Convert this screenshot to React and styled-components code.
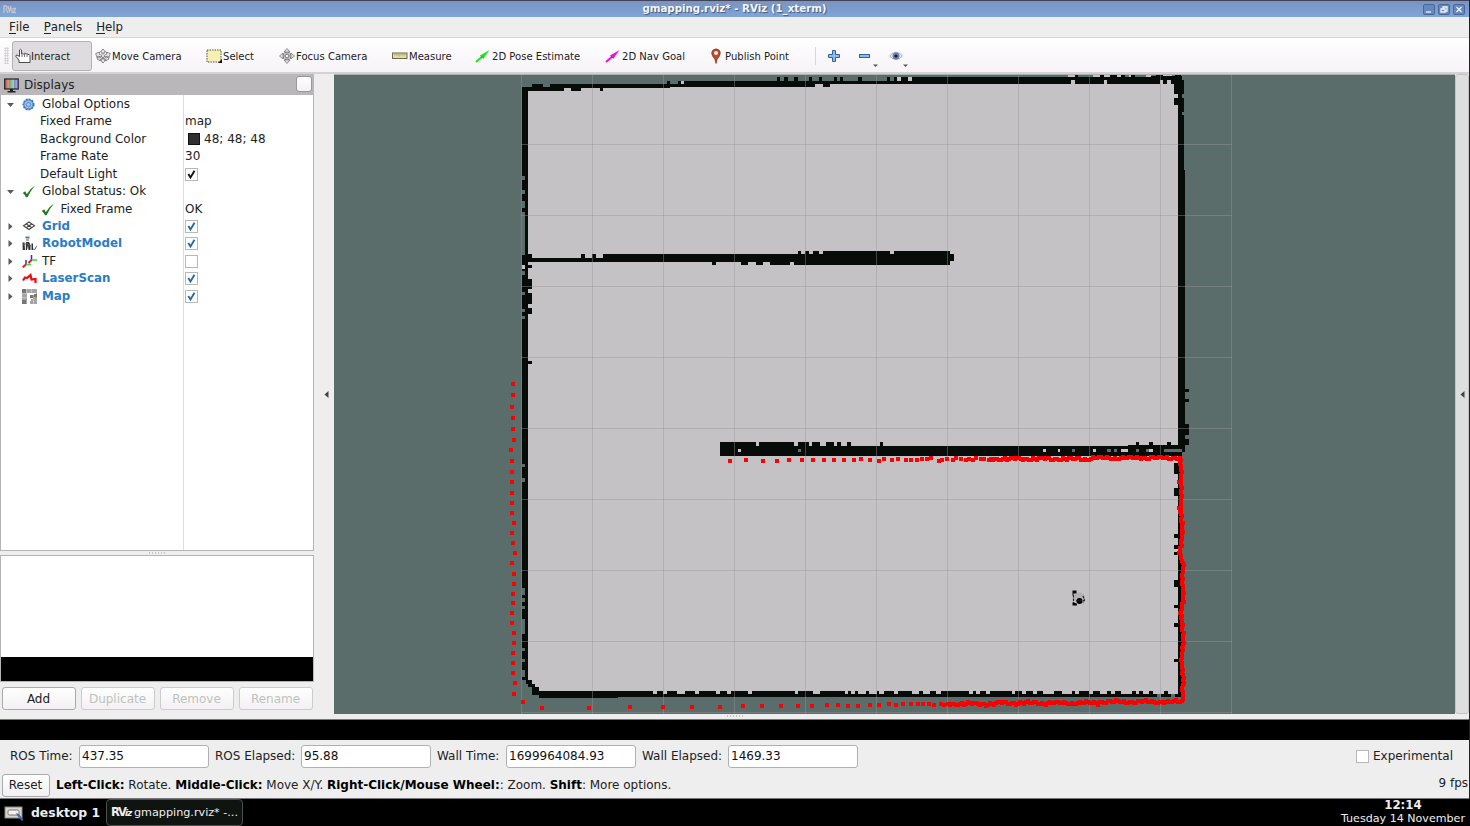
import React from "react";
import styled, { createGlobalStyle, css } from "styled-components";

const GlobalStyle = createGlobalStyle`
  html, body { margin: 0; padding: 0; background: #000; }
  * { box-sizing: border-box; }
`;

const Desktop = styled.div`
  width: 1470px;
  height: 826px;
  display: flex;
  flex-direction: column;
  overflow: hidden;
  background: #000;
  color: #1c221e;
  font-family: "DejaVu Sans", Verdana, sans-serif;
  font-size: 12px;
  line-height: 17px;
  white-space: nowrap;
`;

/* ---------- window frame ---------- */
const Window = styled.div`
  width: 1470px;
  flex: none;
  display: flex;
  flex-direction: column;
  border-right: 1px solid #222;
`;
const TitleBar = styled.header`
  height: 17px;
  flex: none;
  display: flex;
  align-items: center;
  padding: 0 4px 0 3px;
  border-top: 1px solid #40445a;
  background: linear-gradient(#7d92bb, #7a9bcb 40%, #80a6d6);
`;
const TitleText = styled.h1`
  margin: 0;
  flex: 1;
  padding: 0 0 2px 30px;
  text-align: center;
  font-size: 10.25px;
  line-height: 14px;
  font-weight: bold;
  color: #f4f6fa;
  text-shadow: 1px 1px 1px #44587c;
`;
const WindowButtons = styled.div`
  display: flex;
  gap: 3px;
`;
const MenuBar = styled.nav`
  height: 21px;
  flex: none;
  display: flex;
  gap: 14px;
  padding: 2px 9px 0;
  font-size: 11.8px;
  background: #eee;
  border-bottom: 1px solid #d8d8d8;
  u { text-decoration: none; border-bottom: 1px solid #222; display: inline-block; height: 15px; }
`;

/* ---------- toolbar ---------- */
const ToolBar = styled.div`
  height: 36px;
  flex: none;
  display: flex;
  align-items: center;
  padding-top: 1px;
  background: linear-gradient(#fff, #f7f3f7);
  border-bottom: 2px solid #d4d2d4;
  font-size: 10.05px;
`;
const Grip = styled.div`
  width: 5px;
  height: 17px;
  margin: 0 3px 0 4px;
  background: radial-gradient(circle, #c8c8c8 0.8px, transparent 1px) 0 0 / 2.5px 2.5px;
`;
const Tool = styled.div`
  width: ${(p) => p.$w}px;
  height: 30px;
  display: flex;
  align-items: center;
  gap: 1px;
  padding-top: 1px;
  padding-left: 2px;
  border: 1px solid transparent;
  border-radius: 3px;
  ${(p) => p.$active && css`
    background: #dedcde;
    border-color: #b4b2b4;
    gap: 0;
  `}
  svg { flex: none; }
`;
const Separator = styled.div`
  width: 1px;
  height: 18px;
  margin-right: 12px;
  background: #d8d6d8;
`;
const MiniTool = styled.div`
  width: ${(p) => p.$w}px;
  height: 30px;
  display: flex;
  align-items: center;
  padding-top: 1px;
`;

/* ---------- centre ---------- */
const Workspace = styled.main`
  height: 640px;
  flex: none;
  display: flex;
  background: #eee;
`;
const SidePanel = styled.aside`
  width: 314px;
  flex: none;
  display: flex;
  flex-direction: column;
`;
const PanelHeader = styled.div`
  height: 21px;
  flex: none;
  display: flex;
  align-items: center;
  gap: 5px;
  padding: 1px 2px 0 4px;
  background: #bab7ba;
`;
const PanelTitle = styled.span`
  flex: 1;
`;
const PanelButton = styled.span`
  width: 16px;
  height: 16px;
  margin-top: -2px;
  border: 1px solid #999;
  border-radius: 3px;
  background: linear-gradient(#fff, #f4f2f4);
`;
const Tree = styled.div`
  height: 456px;
  flex: none;
  display: grid;
  grid-template-columns: 183px 1fr;
  grid-template-rows: repeat(12, 17.45px) 1fr;
  border: 1px solid #b4b4b4;
  border-top: none;
  background: #fff;
`;
const NameCell = styled.div`
  display: flex;
  align-items: center;
  padding-top: 1.5px;
  border-right: 1px solid #dcdcdc;
  color: ${(p) => (p.$link ? "#2a7cc4" : "#1c221e")};
  font-weight: ${(p) => (p.$link ? "bold" : "normal")};
  font-size: ${(p) => (p.$link ? 11.85 : 11.95)}px;
`;
const Expander = styled.span`
  width: 20px;
  display: flex;
  padding-left: 5px;
`;
const IconSlot = styled.span`
  width: 20px;
  margin-left: ${(p) => p.$indent || 0}px;
  display: flex;
`;
const PlainName = styled.span`
  padding-left: 39px;
`;
const ValueCell = styled.div`
  display: flex;
  align-items: center;
  padding: 1.5px 0 0 1px;
`;
const Swatch = styled.span`
  width: 12px;
  height: 12px;
  margin: 0 4px 0 3px;
  background: #303030;
  border: 1px solid #111;
`;
const CheckBox = styled.span`
  width: 13px;
  height: 13px;
  display: flex;
  border: 1px solid #b8b8b8;
  background: #fff;
`;
const SplitHandle = styled.div`
  height: 4px;
  flex: none;
  display: flex;
  justify-content: center;
  align-items: center;
`;
const Dots = styled.span`
  width: 16px;
  height: 2px;
  background: repeating-linear-gradient(90deg, #c4c4c4 0 1px, transparent 1px 3px);
`;
const Description = styled.div`
  height: 127px;
  flex: none;
  border: 1px solid #b4b4b4;
  background: linear-gradient(#fff 101px, #000 101px);
`;
const ButtonRow = styled.div`
  display: flex;
  gap: 5px;
  padding: 5px 1px 0 2px;
`;
const PushButton = styled.span`
  width: ${(p) => p.$w || 74}px;
  height: 23px;
  flex: none;
  display: flex;
  align-items: center;
  justify-content: center;
  padding: 1px 1px 0 0;
  border: 1px solid ${(p) => (p.$disabled ? "#ccc" : "#aaa")};
  border-radius: 3px;
  background: linear-gradient(#fff, #f3f0f3);
  color: ${(p) => (p.$disabled ? "#bcc4bc" : "#1c221e")};
`;
const CollapseBar = styled.div`
  width: ${(p) => p.$w}px;
  flex: none;
  display: flex;
  align-items: center;
  justify-content: center;
  padding-left: ${(p) => p.$pad || 0}px;
  ${(p) => p.$pressed && css`
    background: #dedede;
    border: 1px solid #c4c4c4;
    border-radius: 3px;
  `}
`;
const View = styled.svg`
  width: 1121px;
  height: 640px;
  display: block;
  flex: none;
`;

/* ---------- bottom ---------- */
const BottomSplit = styled.div`
  height: 6px;
  flex: none;
  display: flex;
  justify-content: center;
  background: #eee;
  border-bottom: 1px solid #777;
  padding-top: 1px;
`;
const BlackStrip = styled.div`
  height: 20px;
  flex: none;
`;
const TimePanel = styled.section`
  height: 32px;
  flex: none;
  display: flex;
  align-items: center;
  background: #eee;
`;
const FieldLabel = styled.label`
  width: ${(p) => p.$w}px;
  padding-left: ${(p) => p.$pad}px;
`;
const Field = styled.span`
  width: 130px;
  height: 23px;
  padding: 2px;
  border: 1px solid #b0b0b0;
  border-radius: 3px;
  background: #fff;
  color: #111;
`;
const Experimental = styled.span`
  display: flex;
  align-items: center;
  gap: 4px;
  margin-left: auto;
  padding-right: 16px;
`;
const StatusBar = styled.footer`
  height: 27px;
  flex: none;
  display: flex;
  align-items: center;
  gap: 6px;
  padding: 0 1px 0 2px;
  background: #eee;
  border-bottom: 1px solid #777;
  font-size: 11.99px;
  b { color: #000; }
`;
const Fps = styled.span`
  margin-left: auto;
  margin-top: -4px;
`;
const TaskBar = styled.div`
  height: 27px;
  flex: none;
  display: flex;
  align-items: center;
  padding-left: 4px;
  color: #eee;
`;
const DesktopName = styled.b`
  width: 81px;
  padding-left: 6px;
  font-size: 12.4px;
`;
const TaskButton = styled.span`
  width: 137px;
  height: 27px;
  display: flex;
  align-items: center;
  gap: 2px;
  padding-left: 4px;
  border: 1px solid #4a4e4c;
  border-radius: 4px;
  background: #0f1411;
  font-size: 11.2px;
`;
const TaskLogo = styled.b`
  width: 21px;
  font-size: 11.5px;
  letter-spacing: -1.9px;
  i { font-size: 9px; letter-spacing: -1px; }
`;
const Clock = styled.div`
  margin-left: auto;
  padding: 0 5px 0 0;
  display: flex;
  flex-direction: column;
  align-items: center;
  font-size: 11.1px;
  line-height: 14.5px;
  b { font-size: 11.8px; line-height: 14px; }
`;

/* ---------- icons ---------- */
const Hand = () => (
  <svg width="16" height="16" viewBox="0 0 16 16">
    <path d="M4 14.500V12L1 8.500Q.5 7 2 7l2.500 1.500V2Q5.500.5 6.500 2v4Q7.500 4.500 8.500 6 9.500 4.500 11 6q1-.8 2 .5 1.500-.5 2 1v7Z" fill="#fff" stroke="#4a4a4a" />
    <path d="M7 6v3M9.500 6v3M12 6.500V9" stroke="#777" fill="none" />
  </svg>
);
const MoveIcon = () => (
  <svg width="16" height="16" viewBox="0 0 16 16" fill="#ececec" stroke="#707070" strokeWidth=".8">
    <path d="M8 1l2.500 3H9v2L7 6V4H5.500ZM8 15l2.500-3H9V10H7v2H5.500Z" />
    <path d="M.7 5.500l4-1.500-.7 2 3 1.500-1 1.500-3-1-1 1.500ZM15.300 5.500l-4-1.500.7 2-3 1.500 1 1.500 3-1 1 1.500ZM2 11l1-2 1 1 3-1.500L8 10l-3 1.500.5 1.500ZM14 11l-1-2-1 1-3-1.500L8 10l3 1.500-.5 1.500Z" />
  </svg>
);
const SelectIcon = () => (
  <svg width="16" height="14" viewBox="0 0 16 14">
    <rect x="1" y="1" width="14" height="12" fill="#f7f0b4" stroke="#55553c" strokeDasharray="1.500 1" />
    <path d="M12 14h4v-4Z" fill="#111" />
  </svg>
);
const FocusIcon = () => (
  <svg width="16" height="16" viewBox="0 0 16 16" fill="#ddd" stroke="#777" strokeWidth=".8">
    <path d="M8 .5L11 4H9v8h2l-3 3.500L5 12h2V4H5ZM.5 8L4 5v2h8V5l3.500 3-3.500 3V9H4v2Z" />
    <circle cx="8" cy="8" r="4" fill="none" /><circle cx="8" cy="8" r="1.800" fill="#f4f4f4" />
  </svg>
);
const Ruler = () => (
  <svg width="16" height="8" viewBox="0 0 16 8">
    <rect x=".5" y="1" width="14.500" height="5.500" fill="#e2dca0" stroke="#6d6a50" />
    <path d="M3 1.500v2M5 1.500v2M7 1.500v3M9 1.500v2M11 1.500v2M13 1.500v2" stroke="#8a8560" strokeWidth=".7" />
  </svg>
);
const ArrowIcon = ({ color }) => (
  <svg width="16" height="14" viewBox="0 0 16 14">
    <path d="M1 13L8 7" stroke={color} strokeWidth="2.200" />
    <path d="M14.500 1L5 6.500 8.500 9.500Z" fill={color} />
    <path d="M5.500 7L9 9.500" stroke="#333" strokeOpacity=".45" strokeWidth=".8" />
  </svg>
);
const Pin = () => (
  <svg width="16" height="16" viewBox="0 0 16 16">
    <path d="M8 15.500Q7.500 11 4.500 8 2.500 4 5 2 8-.3 11 2 13.500 4 11.500 8 8.500 11 8 15.500Z" fill="#bd4a2b" stroke="#7a2c18" strokeWidth=".6" />
    <circle cx="8" cy="5" r="2" fill="#fbeee8" />
  </svg>
);
const PlusIcon = () => (
  <svg width="12" height="12" viewBox="0 0 12 12">
    <path d="M4.500.5h3v4h4v3h-4v4h-3v-4h-4v-3h4Z" fill="#8dbcec" stroke="#33639f" />
  </svg>
);
const MinusIcon = () => (
  <svg width="20" height="24" viewBox="0 0 20 24">
    <rect x=".5" y="10.500" width="10" height="3" fill="#8dbcec" stroke="#33639f" />
    <path d="M14 20.500h5l-2.500 2.500Z" fill="#555" />
  </svg>
);
const EyeIcon = () => (
  <svg width="20" height="24" viewBox="0 0 20 24">
    <path d="M.5 12Q7 4.500 13.500 12 7 19 .5 12Z" fill="#ececec" stroke="#aaa" />
    <circle cx="7" cy="12" r="3.500" fill="#6d80b8" /><circle cx="7" cy="12" r="1.600" fill="#151a38" />
    <path d="M14 20.500h5l-2.500 2.500Z" fill="#555" />
  </svg>
);
const Monitor = () => (
  <svg width="15" height="15" viewBox="0 0 15 15">
    <defs>
      <linearGradient id="rgb">
        <stop offset="0" stopColor="#d04a4a" /><stop offset=".33" stopColor="#d8a0a0" />
        <stop offset=".34" stopColor="#63b463" /><stop offset=".66" stopColor="#a0d8a0" />
        <stop offset=".67" stopColor="#7c7cd8" /><stop offset="1" stopColor="#b0b0ec" />
      </linearGradient>
    </defs>
    <rect x=".7" y="1" width="13.500" height="10" fill="url(#rgb)" stroke="#222" strokeWidth="1.200" />
    <path d="M6 11h3v2h2.500v1.500h-8V13H6Z" fill="#222" />
  </svg>
);
const Gear = () => (
  <svg width="13" height="13" viewBox="0 0 13 13">
    <circle cx="6.500" cy="6.500" r="5.200" fill="#6b9bd6" stroke="#3f72b4" strokeWidth="1.600" strokeDasharray="2 1" />
    <circle cx="6.500" cy="6.500" r="3.300" fill="none" stroke="#b8d2f0" strokeWidth=".8" />
    <circle cx="6.500" cy="6.500" r="1.300" fill="#b8d2f0" />
  </svg>
);
const OkTick = () => (
  <svg width="14" height="13" viewBox="0 0 14 13">
    <path d="M.8 8L3.200 6.300 4.800 9.200Q8 3.800 13 .6 8.500 6 5.500 12.200H4Q2.700 9.500 .8 8Z" fill="#1f781f" />
  </svg>
);
const GridIcon = () => (
  <svg width="14" height="11" viewBox="0 0 13 11" fill="none" stroke="#444" strokeWidth="1.100">
    <path d="M6.500 1L12 4.800 6.500 8.500 1 4.800ZM3.800 3l5.500 3.700M9.200 3L3.700 6.700" />
  </svg>
);
const RobotIcon = () => (
  <svg width="15" height="15" viewBox="0 0 15 15">
    <path d="M3.500.5h4v2h-4Z" fill="#66729c" />
    <path d="M4 3h3v2H4Z" fill="#aaa" />
    <path d="M.5 6.500h2L3 14H.7ZM4 6h3l1.500 3V14H6.500L6 9 5 14H3.800ZM9.500 7.500h1.500V14H9.500Z" fill="#303234" />
    <path d="M1 8.500l4-1 4 2.500M11 13l2 .5 1.500-3.500" stroke="#666" fill="none" />
  </svg>
);
const TfIcon = () => (
  <svg width="15" height="13" viewBox="0 0 15 13" fill="none" strokeWidth="1.500">
    <path d="M9.500 6V0M4 10V5" stroke="#2b2bea" />
    <path d="M9.500 5H15M4 9.500h5" stroke="#38dc38" />
    <path d="M9.500 5L6.500 8M4 9.500L.7 12.300" stroke="#f01818" strokeWidth="2" />
  </svg>
);
const LaserIcon = () => (
  <svg width="16" height="11" viewBox="0 0 16 11">
    <path d="M1 7.500L3 4.500l2 .5L8.500 2 9.500 6.500 13.500 6v4" fill="none" stroke="#fb0606" strokeWidth="2.200" />
  </svg>
);
const MapIcon = () => (
  <svg width="15" height="15" viewBox="0 0 15 15" shapeRendering="crispEdges">
    <rect width="15" height="15" fill="#a4a4a4" />
    <path d="M5 4h9v2h-3v4H9v2H8v3H5Z" fill="#fff" />
    <path d="M0 0h4v4H0ZM8 6h3v3H8ZM0 11h4v4H0ZM12 5h3v3h-3Z" fill="#777" />
    <path d="M0 4.500h5M0 8.500h5M4.500 0v4M9.500 0v4M11.500 10v5" stroke="#c4c4c4" />
  </svg>
);
const Tick = ({ color }) => (
  <svg width="11" height="11" viewBox="0 0 11 11">
    <path d="M2.300 5L4.500 8.500 8.500 1.800" fill="none" stroke={color} strokeWidth="1.900" />
  </svg>
);
const Caret = ({ open }) => (
  <svg width="9" height="9" viewBox="0 0 9 9">
    <path d={open ? "M1 3h7l-3.500 4Z" : "M2.500 1v7L6.500 4.500Z"} fill="#585c58" />
  </svg>
);
const BarArrow = () => (
  <svg width="5" height="7" viewBox="0 0 5 7"><path d="M4.500 0v7L.5 3.500Z" fill="#444" /></svg>
);
const PagerIcon = () => (
  <svg width="21" height="18" viewBox="0 0 21 18">
    <rect x="1" y="3" width="17" height="11" fill="#d8d4ce" stroke="#8d8a86" />
    <rect x="4" y="6" width="11" height="5" rx="1.500" fill="#f4f2f0" stroke="#77736f" />
    <path d="M12 9l3 1 4.500 6-1.500 1-4.500-5Z" fill="#3d6fae" />
  </svg>
);
const AppIcon = () => (
  <svg width="13" height="9" viewBox="0 0 13 9" fill="none" stroke="#c0c6d0" strokeWidth="1.300">
    <path d="M1 8V1h2q2 1.500 0 3l2 4M5 1l1.500 6L8 1M9 3v5M10 3.500h2.500L10 7.500h3" />
  </svg>
);
const FrameButton = ({ d }) => (
  <svg width="12" height="11" viewBox="0 0 12 11" fill="none">
    <rect x=".5" y=".5" width="11" height="10" rx="1.500" fill="#6689bd" stroke="#48689c" />
    <path d={d} stroke="#f2f5fa" strokeWidth="1.300" />
  </svg>
);

/* ---------- occupancy map ---------- */
const UNKNOWN = "#5b6d6a";
const FREE = "#c5c2c5";
const WALL = "#080c08";

/* rows of cells: [top, bottom, x0, x1, x0, x1, ...] */
const row = ([y0, y1, ...xs]) => {
  let d = "";
  for (let i = 0; i < xs.length; i += 2) d += `M${xs[i]} ${y0}H${xs[i + 1]}V${y1}H${xs[i]}Z`;
  return d;
};
/* columns of cells: [left, right, y0, y1, y0, y1, ...] */
const column = ([x0, x1, ...ys]) => {
  let d = "";
  for (let i = 0; i < ys.length; i += 2) d += `M${x0} ${ys[i]}H${x1}V${ys[i + 1]}H${x0}Z`;
  return d;
};

const freeCells = [
  [87, 687, 528, 1178],
  [687, 694, 535, 1178],
  [83, 88, 815, 1178],
  [80, 84, 1071, 1075, 1104, 1107, 1160, 1163, 1167, 1171],
  [81, 85, 681, 684],
  [77, 81, 897, 901, 908, 912],
  [75, 77, 1068, 1075, 1093, 1100, 1104, 1110, 1117, 1121, 1129, 1131, 1146, 1151, 1163, 1172],
].map(row).join("");

const wallCells = [
  [75, 77, 1075, 1078, 1100, 1104, 1110, 1117, 1121, 1125, 1131, 1135, 1156, 1163, 1175, 1181],
  [76, 80, 1151, 1182],
  [77, 81, 777, 780, 784, 788, 794, 798, 809, 812, 819, 822, 834, 837, 840, 843, 858, 862, 887, 890, 894, 897, 901, 908, 912, 1071, 1075, 1104, 1107, 1160, 1163, 1167, 1171, 1178],
  [77, 80, 1071, 1075, 1104, 1107],
  [81, 84, 667, 670, 678, 681, 684, 1071, 1075, 1104, 1107, 1160, 1163, 1167, 1171, 1175],
  [84, 87, 532, 543, 550, 815, 823, 830],
  [87, 88, 522, 670],
  [88, 91, 522, 564, 571, 581, 600, 603],
  [251, 254, 798, 801, 805, 809, 813, 819, 823, 890, 894, 950],
  [254, 258, 528, 532, 581, 585, 592, 596, 603, 954],
  [258, 261, 522, 954],
  [261, 262, 522, 950],
  [262, 265, 712, 716, 741, 748, 756, 763, 770, 790, 794, 950],
  [442, 446, 720, 756, 759, 794, 798, 809, 812, 820, 826, 834, 837, 841, 847, 851, 880, 883, 1136, 1139, 1149, 1153, 1167, 1171],
  [446, 456, 720, 1182],
  [445, 446, 1128, 1182],
  [680, 684, 526, 532],
  [684, 687, 528, 535],
  [687, 695, 532, 539],
  [691, 694, 539, 653, 657, 663, 667, 677, 685, 695, 699, 716, 720, 727, 731, 748, 752, 795, 798, 813, 820, 845, 848, 851, 855, 858, 866, 869, 877, 879, 884, 894, 898, 912, 919, 923, 930, 936, 941, 969, 973, 976, 980, 986, 990, 1012, 1015, 1022, 1026, 1033, 1037, 1043, 1054, 1062, 1072, 1075, 1079, 1089, 1093, 1100, 1107, 1111, 1115, 1121, 1132, 1136, 1139, 1143, 1149, 1153, 1164, 1168],
  [694, 697, 539, 1157, 1161, 1171, 1175, 1182],
  [697, 698, 539, 618],
].map(row).join("");

const wallColumns = [
  [522, 528, 88, 680],
  [528, 532, 265, 268, 279, 289, 293, 304, 308, 314, 361, 364],
  [1174, 1184, 80, 94, 98, 105],
  [1178, 1182, 94, 98, 456, 697],
  [1178, 1184, 105, 170],
  [1178, 1185, 170, 452],
  [1185, 1189, 389, 392, 399, 402, 424, 435, 439, 445],
  [1174, 1178, 463, 474, 488, 496, 534, 538, 545, 549, 552, 555, 580, 587, 605, 608, 623, 627, 659, 662],
].map(column).join("");

const unknownGaps =
  column([522, 525, 176, 180, 190, 194, 201, 208, 212, 255, 271, 275, 292, 295, 309, 312, 316, 319, 464, 467, 478, 482, 588, 595, 598, 602, 606, 609, 619, 634, 648, 651, 659, 662, 670, 677]) +
  column([1182, 1184, 112, 115]) +
  row([449, 452, 798, 801, 1072, 1075, 1107, 1111, 1114, 1117, 1136, 1139, 1146, 1149, 1164, 1182]);
const freeGaps = row([449, 452, 738, 741, 1043, 1046, 1058, 1060, 1093, 1096, 1121, 1128, 1149, 1153]) + column([522, 525, 265, 269]);

const gridX = [521, 592, 663, 734, 805, 876, 947, 1018, 1089, 1160, 1231];
const gridY = [144, 215, 286, 357, 428, 499, 570, 641, 712];

/* laser returns */
const leftScan = [
  [513, 384], [513, 395], [512, 407], [513, 418], [513, 429], [514, 440], [511, 450], [512, 461], [512, 472], [512, 482],
  [512, 493], [512, 503], [512, 513], [514, 523], [512, 533], [513, 543], [515, 553], [512, 563], [514, 574], [514, 584],
  [513, 594], [513, 603], [512, 613], [512, 623], [514, 633], [514, 643], [513, 653], [513, 663], [513, 673], [515, 683],
  [514, 694], [523, 702],
];
const bottomScan = [
  [542, 708], [589, 708], [630, 707], [663, 707], [692, 707], [720, 707], [743, 706], [762, 706], [781, 706], [798, 706],
  [812, 706], [827, 705], [838, 705], [848, 706], [858, 706], [870, 705], [879, 705], [889, 704], [896, 705], [903, 704],
  [911, 704], [918, 704], [923, 704], [929, 704], [934, 705], [941, 704], [944, 705],
];
const middleScan = [
  [730, 461], [746, 460], [763, 461], [777, 461], [789, 460], [802, 460], [813, 460], [824, 460], [834, 460], [844, 460],
  [854, 460], [861, 459], [870, 460], [879, 461], [884, 459], [892, 460], [898, 459], [906, 460], [911, 460], [917, 460],
  [922, 459], [927, 459], [931, 458], [939, 461], [942, 460], [947, 459], [953, 460], [956, 458], [961, 459], [966, 460],
  [969, 459], [973, 460], [976, 458], [981, 459], [984, 459], [989, 460],
];
const wobble = (i) => Math.round(Math.sin(i * 1.7) + Math.sin(i * 0.43) * 0.8);
const denseMiddle = Array.from({ length: 95 }, (_, i) => [991 + i * 2, 459 - (i > 50 ? 1 : 0) + Math.round(wobble(i) * 0.6)]);
const denseBottom = Array.from({ length: 118 }, (_, i) => [948 + i * 2, Math.round(704 - i * 0.02) + wobble(i)]);
const sideTrace = [
  [1180, 458], [1180, 464], [1181, 470], [1181, 477], [1179, 482], [1181, 486], [1181, 503], [1179, 508], [1181, 514],
  [1182, 530], [1181, 543], [1179, 553], [1183, 563], [1182, 577], [1183, 600], [1180, 613], [1182, 623], [1183, 640],
  [1181, 660], [1183, 680], [1182, 690], [1183, 697], [1181, 703],
];
const denseSide = sideTrace.slice(1).flatMap(([x, y], i) => {
  const [px, py] = sideTrace[i];
  const n = Math.ceil((y - py) / 2.5);
  return Array.from({ length: n }, (_, k) => [Math.round(px + ((x - px) * k) / n) + (k % 3 === 1 ? 1 : 0), Math.round(py + ((y - py) * k) / n)]);
});
const scan = [...leftScan, ...bottomScan, ...middleScan, ...denseMiddle, ...denseBottom, ...denseSide]
  .map(([x, y]) => `M${x - 2} ${y - 2}h4v4h-4Z`)
  .join("");

const MapView = () => (
  <View viewBox="334 74 1121 640" shapeRendering="crispEdges">
    <rect x="334" y="74" width="1121" height="640" fill={UNKNOWN} />
    <path d={freeCells} fill={FREE} />
    <path d={wallCells + wallColumns} fill={WALL} />
    <path d={unknownGaps} fill={UNKNOWN} />
    <path d={freeGaps} fill={FREE} />
    <g fill="#96969b" fillOpacity=".42">
      {gridX.map((x) => <rect key={x} x={x} y="74" width="1" height="640" />)}
      {gridY.map((y) => <rect key={y} x="521" y={y} width="711" height="1" />)}
    </g>
    <rect x="334" y="74" width="1121" height="1" fill="#a9b1af" />
    <path d={scan} fill="#fb0000" />
    <g shapeRendering="auto">
      <circle cx="1079.500" cy="598" r="5.500" fill="#b4b1b4" />
      <circle cx="1079.500" cy="601" r="3" fill="#050505" />
      <path d="M1072.500 590.500h4v3h-3v2h-1ZM1072.500 602.500h2l1.500 1h1v2h-4.500Z" fill="#050505" />
      <path d="M1073.500 595v8M1083 596l1.500 4-1.500 3M1076 600.500h8" stroke="#222" fill="none" strokeWidth="1.200" strokeDasharray="2.500 1" />
    </g>
  </View>
);

/* ---------- content ---------- */
const tools = [
  { label: "Interact", icon: <Hand />, w: 80, active: true },
  { label: "Move Camera", icon: <MoveIcon />, w: 111 },
  { label: "Select", icon: <SelectIcon />, w: 73 },
  { label: "Focus Camera", icon: <FocusIcon />, w: 113 },
  { label: "Measure", icon: <Ruler />, w: 83 },
  { label: "2D Pose Estimate", icon: <ArrowIcon color="#1ee61e" />, w: 130 },
  { label: "2D Nav Goal", icon: <ArrowIcon color="#f012d8" />, w: 103 },
  { label: "Publish Point", icon: <Pin />, w: 110 },
];

const check = (color) => <CheckBox>{color && <Tick color={color} />}</CheckBox>;
const rows = [
  { name: "Global Options", open: true, icon: <Gear /> },
  { name: "Fixed Frame", value: "map" },
  { name: "Background Color", value: <><Swatch />48; 48; 48</> },
  { name: "Frame Rate", value: "30" },
  { name: "Default Light", value: check("#111") },
  { name: "Global Status: Ok", open: true, icon: <OkTick /> },
  { name: "Fixed Frame", icon: <OkTick />, leaf: true, value: "OK" },
  { name: "Grid", icon: <GridIcon />, link: true, value: check("#2668a8") },
  { name: "RobotModel", icon: <RobotIcon />, link: true, value: check("#2668a8") },
  { name: "TF", icon: <TfIcon />, value: check() },
  { name: "LaserScan", icon: <LaserIcon />, link: true, value: check("#2668a8") },
  { name: "Map", icon: <MapIcon />, link: true, value: check("#2668a8") },
];

const TreeRow = ({ item }) => (
  <>
    <NameCell $link={item.link}>
      {item.icon ? (
        <>
          <Expander>{!item.leaf && <Caret open={item.open} />}</Expander>
          <IconSlot $indent={item.leaf ? 19.5 : 1}>{item.icon}</IconSlot>
          {item.name}
        </>
      ) : (
        <PlainName>{item.name}</PlainName>
      )}
    </NameCell>
    <ValueCell>{item.value}</ValueCell>
  </>
);

export default function App() {
  return (
    <Desktop>
      <GlobalStyle />
      <Window>
        <TitleBar>
          <AppIcon />
          <TitleText>gmapping.rviz* - RViz (1_xterm)</TitleText>
          <WindowButtons>
            <FrameButton d="M3 8h5" />
            <FrameButton d="M3 5h4v3H3ZM5 5V3h4v4H7" />
            <FrameButton d="M3.500 3l5 5M8.500 3l-5 5" />
          </WindowButtons>
        </TitleBar>
        <MenuBar>
          <span><u>F</u>ile</span>
          <span><u>P</u>anels</span>
          <span><u>H</u>elp</span>
        </MenuBar>
        <ToolBar>
          <Grip />
          {tools.map((t) => (
            <Tool key={t.label} $w={t.w} $active={t.active}>{t.icon}{t.label}</Tool>
          ))}
          <Separator />
          <MiniTool $w={31}><PlusIcon /></MiniTool>
          <MiniTool $w={30}><MinusIcon /></MiniTool>
          <MiniTool $w={30}><EyeIcon /></MiniTool>
        </ToolBar>
        <Workspace>
          <SidePanel>
            <PanelHeader>
              <Monitor />
              <PanelTitle>Displays</PanelTitle>
              <PanelButton />
            </PanelHeader>
            <Tree>
              {rows.map((item, i) => <TreeRow key={i} item={item} />)}
              <NameCell />
            </Tree>
            <SplitHandle><Dots /></SplitHandle>
            <Description />
            <ButtonRow>
              <PushButton>Add</PushButton>
              <PushButton $disabled>Duplicate</PushButton>
              <PushButton $disabled>Remove</PushButton>
              <PushButton $disabled>Rename</PushButton>
            </ButtonRow>
          </SidePanel>
          <CollapseBar $w={20} $pad={5}><BarArrow /></CollapseBar>
          <MapView />
          <CollapseBar $w={14} $pressed><BarArrow /></CollapseBar>
        </Workspace>
        <BottomSplit><Dots /></BottomSplit>
        <BlackStrip />
        <TimePanel>
          <FieldLabel $w={79} $pad={10}>ROS Time:</FieldLabel>
          <Field>437.35</Field>
          <FieldLabel $w={92} $pad={6}>ROS Elapsed:</FieldLabel>
          <Field>95.88</Field>
          <FieldLabel $w={75} $pad={6}>Wall Time:</FieldLabel>
          <Field>1699964084.93</Field>
          <FieldLabel $w={92} $pad={6}>Wall Elapsed:</FieldLabel>
          <Field>1469.33</Field>
          <Experimental><CheckBox />Experimental</Experimental>
        </TimePanel>
        <StatusBar>
          <PushButton $w={48}>Reset</PushButton>
          <span>
            <b>Left-Click:</b> Rotate. <b>Middle-Click:</b> Move X/Y. <b>Right-Click/Mouse Wheel:</b>: Zoom. <b>Shift</b>: More options.
          </span>
          <Fps>9 fps</Fps>
        </StatusBar>
      </Window>
      <TaskBar>
        <PagerIcon />
        <DesktopName>desktop 1</DesktopName>
        <TaskButton><TaskLogo>RV<i>iz</i></TaskLogo>gmapping.rviz* -...</TaskButton>
        <Clock><b>12:14</b><span>Tuesday 14 November</span></Clock>
      </TaskBar>
    </Desktop>
  );
}
